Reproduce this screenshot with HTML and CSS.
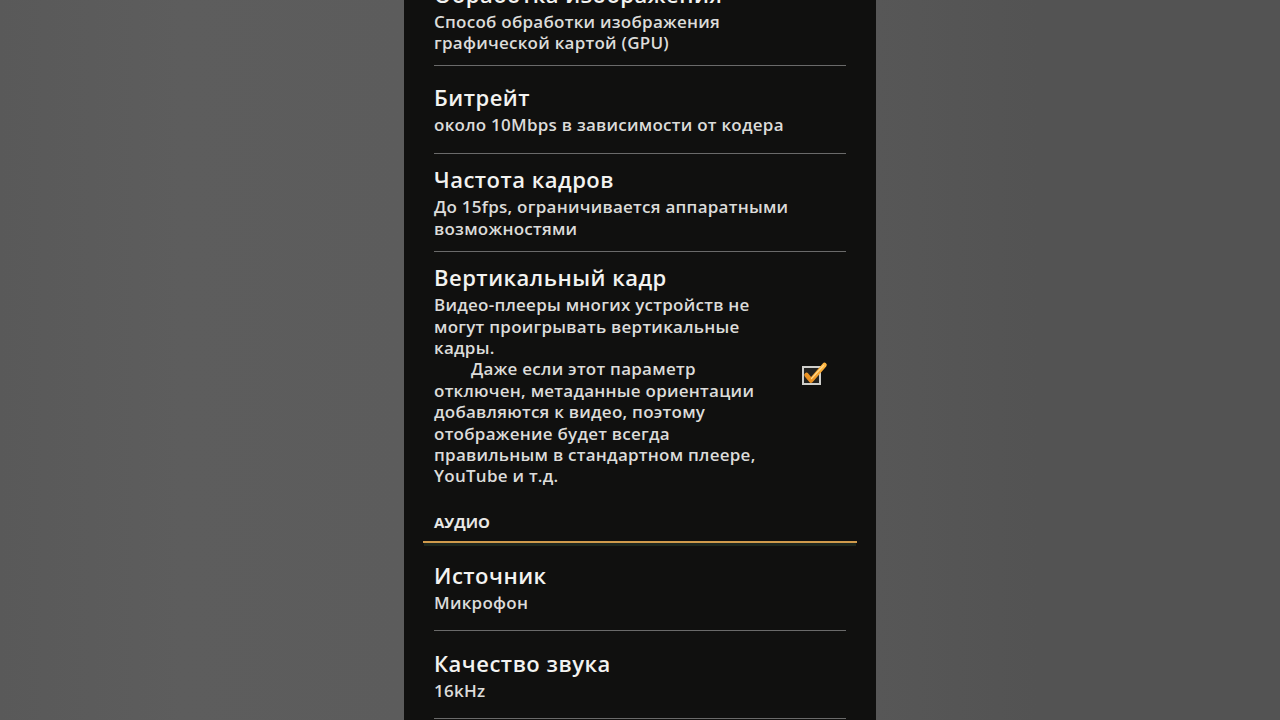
FILE: index.html
```html
<!DOCTYPE html>
<html lang="ru">
<head>
<meta charset="utf-8">
<title>Настройки</title>
<link rel="stylesheet" href="styles.css">
</head>
<body>
<div class="screen">
  <div class="side side-left"></div>
  <main class="panel">
    <div class="list">
      <section class="item item-first">
        <div class="text">
          <div class="title">Обработка изображения</div>
          <div class="summary">Способ обработки изображения<br>графической картой (GPU)</div>
        </div>
      </section>
      <section class="item">
        <div class="text">
          <div class="title">Битрейт</div>
          <div class="summary">около 10Mbps в зависимости от кодера</div>
        </div>
      </section>
      <section class="item">
        <div class="text">
          <div class="title">Частота кадров</div>
          <div class="summary">До 15fps, ограничивается аппаратными<br>возможностями</div>
        </div>
      </section>
      <section class="item item-last">
        <div class="text">
          <div class="title">Вертикальный кадр</div>
          <div class="summary">
            <span class="line">Видео-плееры многих устройств не</span>
            <span class="line">могут проигрывать вертикальные</span>
            <span class="line">кадры.</span>
            <span class="line line-indent">Даже если этот параметр</span>
            <span class="line">отключен, метаданные ориентации</span>
            <span class="line">добавляются к видео, поэтому</span>
            <span class="line">отображение будет всегда</span>
            <span class="line">правильным в стандартном плеере,</span>
            <span class="line">YouTube и т.д.</span>
          </div>
        </div>
        <div class="widget">
          <svg class="checkbox" width="30" height="30" viewBox="0 0 30 30" aria-hidden="true">
            <defs>
              <linearGradient id="chk" x1="0" y1="1" x2="1" y2="0">
                <stop offset="0" stop-color="#e68a1c"/>
                <stop offset="1" stop-color="#ffb640"/>
              </linearGradient>
            </defs>
            <rect x="5" y="7" width="17" height="17" fill="#23221f" stroke="#cfcfcb" stroke-width="2"/>
            <path d="M8.5 15 L13 20.5 L26.5 5" fill="none" stroke="url(#chk)" stroke-width="4.5" stroke-linecap="round" stroke-linejoin="round"/>
            <path d="M13.5 18.5 L25.5 5.5" fill="none" stroke="#ffd88a" stroke-width="1.2" stroke-linecap="round"/>
          </svg>
        </div>
      </section>
      <header class="category">
        <div class="category-label">АУДИО</div>
      </header>
      <section class="item">
        <div class="text">
          <div class="title">Источник</div>
          <div class="summary">Микрофон</div>
        </div>
      </section>
      <section class="item">
        <div class="text">
          <div class="title">Качество звука</div>
          <div class="summary">16kHz</div>
        </div>
      </section>
    </div>
  </main>
  <div class="side side-right"></div>
</div>
</body>
</html>
```

FILE: styles.css
```css
* { box-sizing: border-box; }

html, body {
  margin: 0;
  padding: 0;
  width: 1280px;
  height: 720px;
  overflow: hidden;
  background: #575757;
  font-family: "Open Sans", "DejaVu Sans", sans-serif;
}

.screen {
  display: flex;
  width: 1280px;
  height: 720px;
}

.side {
  flex: 0 0 404px;
  height: 720px;
}

.side-left {
  background: linear-gradient(90deg, #595959 0%, #5d5d5d 45%, #5c5c5c 100%);
}

.side-right {
  background: linear-gradient(90deg, #575757 0%, #535353 40%, #535353 100%);
}

.panel {
  flex: 0 0 472px;
  height: 720px;
  background: #10100f;
  overflow: hidden;
}

.list {
  display: flex;
  flex-direction: column;
  margin-top: -32px;
}

.item {
  display: flex;
  align-items: center;
  min-height: 88px;
  margin: 0 30px;
  padding: 11.5px 0;
  border-bottom: 1px solid #6a6a6a;
}

.item-last {
  border-bottom: none;
}

.text {
  flex: 1;
  display: flex;
  flex-direction: column;
}

.title {
  font-size: 22px;
  line-height: 28px;
  font-weight: 600;
  letter-spacing: 0.5px;
  color: #f3f3f1;
  white-space: nowrap;
}

.summary {
  margin-top: 3px;
  font-size: 17px;
  line-height: 21.4px;
  font-weight: 600;
  letter-spacing: 0.25px;
  color: #dcdcda;
  white-space: nowrap;
}

.line {
  display: block;
}

.line-indent {
  padding-left: 37px;
}

.widget {
  flex: 0 0 30px;
  margin-right: 18px;
  display: flex;
  align-items: center;
  justify-content: center;
}

.checkbox {
  display: block;
}

.category {
  margin: 0 19px;
  padding: 14px 11px 9px;
  border-bottom: 2px solid #cf9a4c;
  box-shadow: 0 4px 0 -1px #1d271f;
}

.category-label {
  font-size: 15px;
  line-height: 20px;
  font-weight: 700;
  color: #e8e8e6;
}
```
